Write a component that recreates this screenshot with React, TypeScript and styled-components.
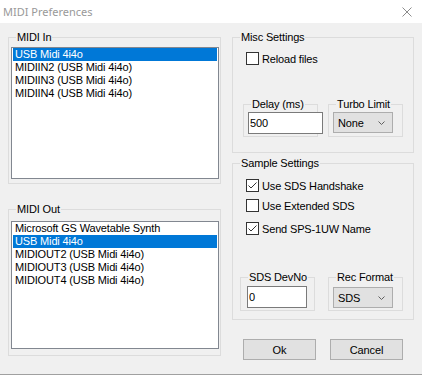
import React from 'react'
import styled, { createGlobalStyle } from 'styled-components'

const GlobalStyle = createGlobalStyle`
	html, body {
		margin: 0;
		padding: 0;
		background: #fff;
	}
	body {
		font-family: "Liberation Sans", Arial, sans-serif;
		font-size: 11px;
		letter-spacing: -0.15px;
		color: #000;
	}
	* {
		box-sizing: border-box;
	}
`

const midiIn = ['USB Midi 4i4o', 'MIDIIN2 (USB Midi 4i4o)', 'MIDIIN3 (USB Midi 4i4o)', 'MIDIIN4 (USB Midi 4i4o)']
const midiOut = [
	'Microsoft GS Wavetable Synth',
	'USB Midi 4i4o',
	'MIDIOUT2 (USB Midi 4i4o)',
	'MIDIOUT3 (USB Midi 4i4o)',
	'MIDIOUT4 (USB Midi 4i4o)',
]

const CloseIcon = () => (
	<svg width='10' height='10' viewBox='0 0 10 10'>
		<path d='M0.5 0.5 L9.5 9.5 M9.5 0.5 L0.5 9.5' stroke='#8c8c8c' strokeWidth='1' fill='none' />
	</svg>
)

const Chevron = () => (
	<svg width='7' height='4' viewBox='0 0 7 4'>
		<polyline points='0.5,0.5 3.5,3.5 6.5,0.5' stroke='#606060' strokeWidth='1' fill='none' />
	</svg>
)

const Check = () => (
	<svg width='11' height='11' viewBox='0 0 11 11'>
		<polyline points='1.5,5.5 4,8 9.5,2.5' stroke='#333' strokeWidth='1' fill='none' />
	</svg>
)

type CheckProps = { label: string; checked?: boolean; top: number }
const CheckBox: React.FC<CheckProps> = ({ label, checked, top }) => (
	<CheckRow $top={top}>
		<Box>{checked && <Check />}</Box>
		{label}
	</CheckRow>
)

type ComboProps = { value: string; top: number }
const Combo: React.FC<ComboProps> = ({ value, top }) => (
	<ComboBox $top={top}>
		{value}
		<Chevron />
	</ComboBox>
)

const App: React.FC = () => (
	<>
		<GlobalStyle />
		<Window>
			<TitleBar>
				MIDI Preferences
				<CloseIcon />
			</TitleBar>
			<Body>
				<Column>
					<Group $h={154}>
						<Caption>MIDI In</Caption>
						<ListBox $h={132} $top={2}>
							{midiIn.map((name, i) => (
								<Item key={name} $selected={i === 0}>
									{name}
								</Item>
							))}
						</ListBox>
					</Group>
					<Group $h={154} $top={18}>
						<Caption>MIDI Out</Caption>
						<ListBox $h={128} $top={4}>
							{midiOut.map((name, i) => (
								<Item key={name} $selected={i === 1}>
									{name}
								</Item>
							))}
						</ListBox>
					</Group>
				</Column>
				<Column>
					<Group $h={123}>
						<Caption>Misc Settings</Caption>
						<CheckBox label='Reload files' top={7} />
						<SubRow $top={32} $left={10} $gap={10}>
							<Group $w={75} $h={40}>
								<Caption>Delay (ms)</Caption>
								<TextBox $w={75} $left={4} $top={0} readOnly value='500' />
							</Group>
							<Group $w={75} $h={40}>
								<Caption>Turbo Limit</Caption>
								<Combo value='None' top={0} />
							</Group>
						</SubRow>
					</Group>
					<Group $h={164} $top={3}>
						<Caption>Sample Settings</Caption>
						<CheckBox label='Use SDS Handshake' checked top={8} />
						<CheckBox label='Use Extended SDS' top={7} />
						<CheckBox label='Send SPS-1UW Name' checked top={10} />
						<SubRow $top={35} $left={7} $gap={13}>
							<Group $w={75} $h={41}>
								<Caption>SDS DevNo</Caption>
								<TextBox $w={60} $left={6} $top={1} readOnly value='0' />
							</Group>
							<Group $w={75} $h={41}>
								<Caption>Rec Format</Caption>
								<Combo value='SDS' top={2} />
							</Group>
						</SubRow>
					</Group>
					<Buttons>
						<Button>Ok</Button>
						<Button>Cancel</Button>
					</Buttons>
				</Column>
			</Body>
		</Window>
	</>
)

const Window = styled.div`
	width: 422px;
	height: 375px;
	display: flex;
	flex-direction: column;
	background: #f0f0f0;
	border-bottom: 1px solid #a0a0a0;
`
const TitleBar = styled.div`
	height: 23px;
	flex: none;
	display: flex;
	align-items: center;
	justify-content: space-between;
	padding: 0 10px 0 3px;
	background: #fff;
	color: #999;
	font-family: "Noto Sans", "Open Sans", sans-serif;
	font-size: 11px;
	letter-spacing: 0;
`
const Body = styled.div`
	flex: 1;
	display: grid;
	grid-template-columns: 213px 182px;
	column-gap: 11px;
	align-items: start;
	padding: 7px 0 0 8px;
`
const Column = styled.div`
	display: flex;
	flex-direction: column;
`
const Group = styled.fieldset<{ $w?: number; $h: number; $top?: number }>`
	margin: ${(p) => p.$top ?? 0}px 0 0 0;
	padding: 0;
	min-width: 0;
	width: ${(p) => (p.$w ? `${p.$w}px` : 'auto')};
	height: ${(p) => p.$h}px;
	flex: none;
	border: 1px solid #dcdcdc;
`
const Caption = styled.legend`
	margin-left: 7px;
	padding: 0 1px;
	height: 15px;
	line-height: 15px;
	white-space: nowrap;
`
const ListBox = styled.div<{ $h: number; $top: number }>`
	height: ${(p) => p.$h}px;
	margin: ${(p) => p.$top}px 1px 0 2px;
	padding: 0 1px;
	background: #fff;
	border: 1px solid #828790;
`
const Item = styled.div<{ $selected?: boolean }>`
	height: 13px;
	line-height: 13px;
	padding-left: 2px;
	white-space: nowrap;
	background: ${(p) => (p.$selected ? '#0078d7' : 'transparent')};
	color: ${(p) => (p.$selected ? '#fff' : '#000')};
`
const CheckRow = styled.label<{ $top: number }>`
	display: flex;
	align-items: center;
	gap: 3px;
	height: 13px;
	margin: ${(p) => p.$top}px 0 0 13px;
	white-space: nowrap;
`
const Box = styled.span`
	width: 13px;
	height: 13px;
	flex: none;
	display: flex;
	align-items: center;
	justify-content: center;
	background: #fff;
	border: 1px solid #333;
`
const SubRow = styled.div<{ $top: number; $left: number; $gap: number }>`
	display: flex;
	align-items: flex-start;
	gap: ${(p) => p.$gap}px;
	margin: ${(p) => p.$top}px 0 0 ${(p) => p.$left}px;
`
const TextBox = styled.input<{ $w: number; $left: number; $top: number }>`
	display: block;
	width: ${(p) => p.$w}px;
	height: 22px;
	margin: ${(p) => p.$top}px 0 0 ${(p) => p.$left}px;
	padding: 0 1px;
	font: inherit;
	letter-spacing: inherit;
	color: #000;
	background: #fff;
	border: 1px solid #7a7a7a;
	border-radius: 0;
	outline: none;
	position: relative;
`
const ComboBox = styled.div<{ $top: number }>`
	display: flex;
	align-items: center;
	justify-content: space-between;
	width: 60px;
	height: 21px;
	margin: ${(p) => p.$top}px 0 0 4px;
	padding: 0 7px 0 4px;
	background: #e1e1e1;
	border: 1px solid #adadad;
`
const Buttons = styled.div`
	display: flex;
	gap: 14px;
	margin: 19px 0 0 11px;
`
const Button = styled.button`
	width: 73px;
	height: 21px;
	padding: 0;
	font: inherit;
	letter-spacing: inherit;
	color: #000;
	background: #e1e1e1;
	border: 1px solid #adadad;
	border-radius: 0;
`

export default App
